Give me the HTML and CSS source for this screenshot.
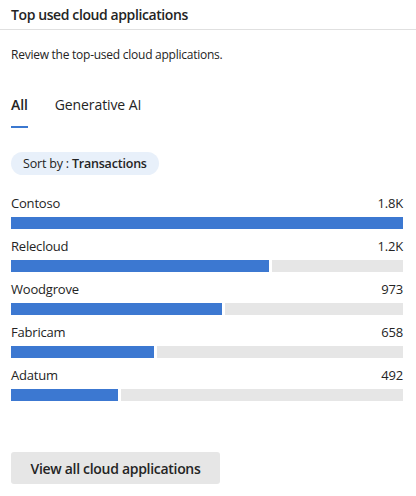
FILE: index.html
```html
<!DOCTYPE html>
<html>
<head>
<meta charset="utf-8">
<link rel="stylesheet" href="styles.css">
</head>
<body>
<div class="card">
  <div class="header"><h1 class="title">Top used cloud applications</h1></div>
  <p class="desc">Review the top-used cloud applications.</p>
  <div class="tabs">
    <div class="tab active">All</div>
    <div class="tab">Generative AI</div>
  </div>
  <div class="pill">Sort by : <b>Transactions</b></div>
  <div class="list">
    <div class="row">
      <div class="row-head"><span>Contoso</span><span>1.8K</span></div>
      <div class="bar"><div class="fill full"></div></div>
    </div>
    <div class="row">
      <div class="row-head"><span>Relecloud</span><span>1.2K</span></div>
      <div class="bar"><div class="fill" style="width:258px"></div><div class="rest"></div></div>
    </div>
    <div class="row">
      <div class="row-head"><span>Woodgrove</span><span>973</span></div>
      <div class="bar"><div class="fill" style="width:211px"></div><div class="rest"></div></div>
    </div>
    <div class="row">
      <div class="row-head"><span>Fabricam</span><span>658</span></div>
      <div class="bar"><div class="fill" style="width:143px"></div><div class="rest"></div></div>
    </div>
    <div class="row">
      <div class="row-head"><span>Adatum</span><span>492</span></div>
      <div class="bar"><div class="fill" style="width:107px"></div><div class="rest"></div></div>
    </div>
  </div>
  <button class="btn">View all cloud applications</button>
</div>
</body>
</html>
```
FILE: styles.css
```css
html, body {
  margin: 0;
  padding: 0;
  background: #ffffff;
}
body {
  font-family: "Open Sans", "Noto Sans", sans-serif;
  color: #242424;
}
.card {
  width: 416px;
  height: 496px;
  box-sizing: border-box;
}
.header {
  height: 29px;
  border-bottom: 1px solid #e0e0e0;
  padding: 0 11px;
  display: flex;
  align-items: center;
}
.title {
  margin: 0;
  font-size: 14px;
  font-weight: 600;
  letter-spacing: -0.4px;
}
.desc {
  margin: 17px 11px 0;
  font-size: 12px;
  line-height: 16px;
  letter-spacing: -0.25px;
}
.tabs {
  display: flex;
  gap: 27px;
  margin: 32px 11px 0;
}
.tab {
  font-size: 14px;
  line-height: 20px;
  padding-bottom: 11px;
  border-bottom: 2px solid transparent;
  letter-spacing: -0.1px;
}
.tab.active {
  font-weight: 600;
  border-bottom-color: #3b78d0;
}
.pill {
  display: inline-block;
  margin: 24px 11px 0;
  background: #e8f0fa;
  border-radius: 12px;
  height: 23px;
  line-height: 23px;
  padding: 0 12px;
  font-size: 12.5px;
  letter-spacing: -0.2px;
}
.pill b {
  font-weight: 600;
}
.list {
  margin: 20px 13px 0 11px;
  display: flex;
  flex-direction: column;
  gap: 9px;
}
.row-head {
  display: flex;
  justify-content: space-between;
  font-size: 13px;
  line-height: 16px;
  letter-spacing: -0.2px;
  margin-bottom: 6px;
}
.bar {
  display: flex;
  gap: 3px;
  height: 12px;
}
.fill {
  background: #3c78d1;
  height: 12px;
}
.fill.full {
  flex: 1;
}
.rest {
  flex: 1;
  background: #e6e6e6;
}
.btn {
  margin: 51px 11px 0;
  width: 209px;
  height: 32px;
  border: none;
  border-radius: 3px;
  background: #e6e6e6;
  color: #242424;
  font-family: "Open Sans", "Noto Sans", sans-serif;
  font-size: 14px;
  font-weight: 600;
  letter-spacing: -0.3px;
  display: block;
}
```
